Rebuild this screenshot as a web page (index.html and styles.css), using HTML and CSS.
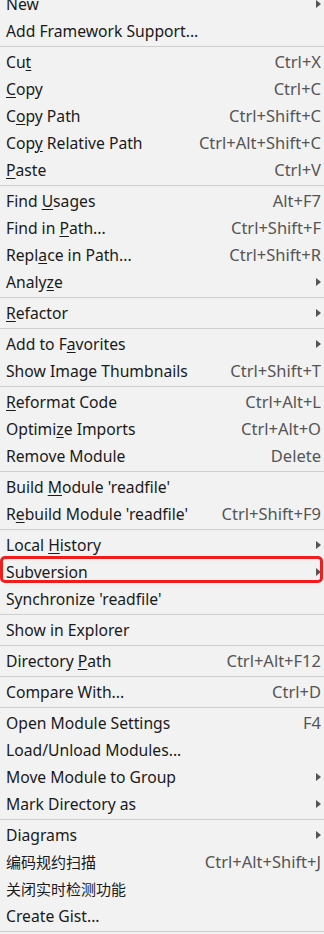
FILE: index.html
```html
<!DOCTYPE html>
<html>
<head>
<meta charset="utf-8">
<link rel="stylesheet" href="styles.css">
</head>
<body>
<div class="menu">
  <div class="item"><span class="label">New</span><span class="arrow"></span></div>
  <div class="item"><span class="label">Add Framework Support...</span></div>
  <div class="sep"></div>
  <div class="item"><span class="label">Cu<u>t</u></span><span class="key">Ctrl+X</span></div>
  <div class="item"><span class="label"><u>C</u>opy</span><span class="key">Ctrl+C</span></div>
  <div class="item"><span class="label">C<u>o</u>py Path</span><span class="key">Ctrl+Shift+C</span></div>
  <div class="item"><span class="label">Cop<u>y</u> Relative Path</span><span class="key">Ctrl+Alt+Shift+C</span></div>
  <div class="item"><span class="label"><u>P</u>aste</span><span class="key">Ctrl+V</span></div>
  <div class="sep"></div>
  <div class="item"><span class="label">Find <u>U</u>sages</span><span class="key">Alt+F7</span></div>
  <div class="item"><span class="label">Find in <u>P</u>ath...</span><span class="key">Ctrl+Shift+F</span></div>
  <div class="item"><span class="label">Repl<u>a</u>ce in Path...</span><span class="key">Ctrl+Shift+R</span></div>
  <div class="item"><span class="label">Analy<u>z</u>e</span><span class="arrow"></span></div>
  <div class="sep"></div>
  <div class="item"><span class="label"><u>R</u>efactor</span><span class="arrow"></span></div>
  <div class="sep"></div>
  <div class="item"><span class="label">Add to F<u>a</u>vorites</span><span class="arrow"></span></div>
  <div class="item"><span class="label">Show Image Thumbnails</span><span class="key">Ctrl+Shift+T</span></div>
  <div class="sep"></div>
  <div class="item"><span class="label"><u>R</u>eformat Code</span><span class="key">Ctrl+Alt+L</span></div>
  <div class="item"><span class="label">Optimi<u>z</u>e Imports</span><span class="key">Ctrl+Alt+O</span></div>
  <div class="item"><span class="label">Remove Module</span><span class="key">Delete</span></div>
  <div class="sep"></div>
  <div class="item"><span class="label">Build <u>M</u>odule 'readfile'</span></div>
  <div class="item"><span class="label">R<u>e</u>build Module 'readfile'</span><span class="key">Ctrl+Shift+F9</span></div>
  <div class="sep"></div>
  <div class="item"><span class="label">Local <u>H</u>istory</span><span class="arrow"></span></div>
  <div class="item highlight"><span class="label"><u>S</u>ubversion</span><span class="arrow"></span><span class="mark"></span></div>
  <div class="item"><span class="label">Synchronize 'readfile'</span></div>
  <div class="sep"></div>
  <div class="item"><span class="label">Show in Explorer</span></div>
  <div class="sep"></div>
  <div class="item"><span class="label">Directory <u>P</u>ath</span><span class="key">Ctrl+Alt+F12</span></div>
  <div class="sep"></div>
  <div class="item"><span class="label">Compare With...</span><span class="key">Ctrl+D</span></div>
  <div class="sep"></div>
  <div class="item"><span class="label">Open Module Settings</span><span class="key">F4</span></div>
  <div class="item"><span class="label">Load/Unload Modules...</span></div>
  <div class="item"><span class="label">Move Module to Group</span><span class="arrow"></span></div>
  <div class="item"><span class="label">Mark Directory as</span><span class="arrow"></span></div>
  <div class="sep"></div>
  <div class="item"><span class="label">Diagrams</span><span class="arrow"></span></div>
  <div class="item"><span class="label cjk">编码规约扫描</span><span class="key">Ctrl+Alt+Shift+J</span></div>
  <div class="item"><span class="label cjk">关闭实时检测功能</span></div>
  <div class="item"><span class="label">Create Gist...</span></div>
  <div class="sep"></div>
</div>
</body>
</html>
```

FILE: styles.css
```css
html, body {
  margin: 0;
  padding: 0;
  background: #f2f2f2;
  overflow: hidden;
}

.menu {
  margin-top: -10px;
  font-family: "Noto Sans", "Noto Sans CJK SC", sans-serif;
  font-size: 15.7px;
  color: #1a1a1a;
}

.item {
  position: relative;
  height: 27px;
  display: flex;
  align-items: center;
  justify-content: space-between;
  padding: 0 3px 0 6px;
  white-space: nowrap;
}

.label u {
  text-decoration-thickness: 1px;
  text-underline-offset: 2px;
}

.label.cjk {
  font-size: 15px;
}

.key {
  color: #555555;
  font-size: 16.5px;
}

.arrow {
  width: 0;
  height: 0;
  border-top: 4.5px solid transparent;
  border-bottom: 4.5px solid transparent;
  border-left: 5px solid #555555;
}

.sep {
  height: 4px;
  display: flex;
  flex-direction: column;
  justify-content: center;
}

.sep::before {
  content: "";
  display: block;
  height: 1px;
  background: #cfcfcf;
}

.mark {
  position: absolute;
  left: 0;
  right: 1px;
  top: -2px;
  bottom: 2px;
  border: 3px solid #f21c1c;
  border-radius: 5px;
  pointer-events: none;
}
```
